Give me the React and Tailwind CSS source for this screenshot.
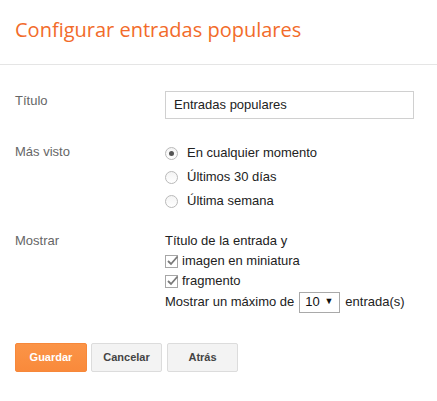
const sans = { fontFamily: '"Liberation Sans", Arial, sans-serif' };

function Radio({ checked, label }) {
  return (
    <div className="flex h-[24px] items-center">
      <span className="flex h-[13px] w-[13px] items-center justify-center rounded-full border border-[#b9b9b9] bg-gradient-to-b from-[#f4f4f4] to-white">
        {checked && <span className="h-[5px] w-[5px] rounded-full bg-[#555]" />}
      </span>
      <span className="ml-[9px] text-[13px] text-[#222]">{label}</span>
    </div>
  );
}

function Check({ label }) {
  return (
    <div className="flex h-[20px] items-center">
      <span className="relative h-[13px] w-[13px] border border-[#a6a6a6] bg-white">
        <svg viewBox="0 0 13 13" className="absolute left-[0px] top-[-2px] h-[13px] w-[13px]">
          <path d="M2 7 L5 10 L11.5 2.5" fill="none" stroke="#7a7a7a" strokeWidth="1.8" />
        </svg>
      </span>
      <span className="ml-[4px] text-[13px] text-[#222]">{label}</span>
    </div>
  );
}

export default function App() {
  return (
    <div className="min-h-[401px] w-[437px] bg-white" style={sans}>
      <div className="border-b border-[#e5e5e5] px-[15px] pb-[20px] pt-[15px]">
        <h1
          className="text-[20px] leading-[29px] text-[#f26b2a]"
          style={{ fontFamily: '"Open Sans", sans-serif' }}
        >
          Configurar entradas populares
        </h1>
      </div>

      <div className="px-[15px]">
        <div className="mt-[26px] flex">
          <div className="w-[150px] text-[13px] leading-[20px] text-[#666]">Título</div>
          <div className="flex h-[28px] w-[249px] items-center border border-[#d0d0d0] px-[8px] text-[13px] text-[#222]">
            Entradas populares
          </div>
        </div>

        <div className="mt-[22px] flex">
          <div className="w-[150px] pt-[1px] text-[13px] leading-[20px] text-[#666]">Más visto</div>
          <div className="flex flex-col">
            <Radio checked label="En cualquier momento" />
            <Radio label="Últimos 30 días" />
            <Radio label="Última semana" />
          </div>
        </div>

        <div className="mt-[18px] flex">
          <div className="w-[150px] text-[13px] leading-[20px] text-[#666]">Mostrar</div>
          <div className="flex flex-col text-[13px] text-[#222]">
            <div className="leading-[20px]">Título de la entrada y</div>
            <Check label="imagen en miniatura" />
            <Check label="fragmento" />
            <div className="flex h-[22px] items-center">
              <span>Mostrar un máximo de</span>
              <span className="ml-[5px] flex h-[21px] w-[41px] items-center justify-between border border-[#a9a9a9] bg-white pl-[5px] pr-[6px] text-[#111]">
                <span>10</span>
                <span className="text-[9px]">▼</span>
              </span>
              <span className="ml-[5px]">entrada(s)</span>
            </div>
          </div>
        </div>

        <div className="mt-[30px] flex text-[11px] font-bold">
          <button className="h-[29px] w-[72px] rounded-[2px] border border-[#f7883a] bg-gradient-to-b from-[#fb9447] to-[#f98a3b] text-white">
            Guardar
          </button>
          <button className="ml-[4px] h-[29px] w-[71px] rounded-[2px] border border-[#dcdcdc] bg-[#f3f3f3] text-[#444]">
            Cancelar
          </button>
          <button className="ml-[5px] h-[29px] w-[71px] rounded-[2px] border border-[#dcdcdc] bg-[#f3f3f3] text-[#444]">
            Atrás
          </button>
        </div>
      </div>
    </div>
  );
}
